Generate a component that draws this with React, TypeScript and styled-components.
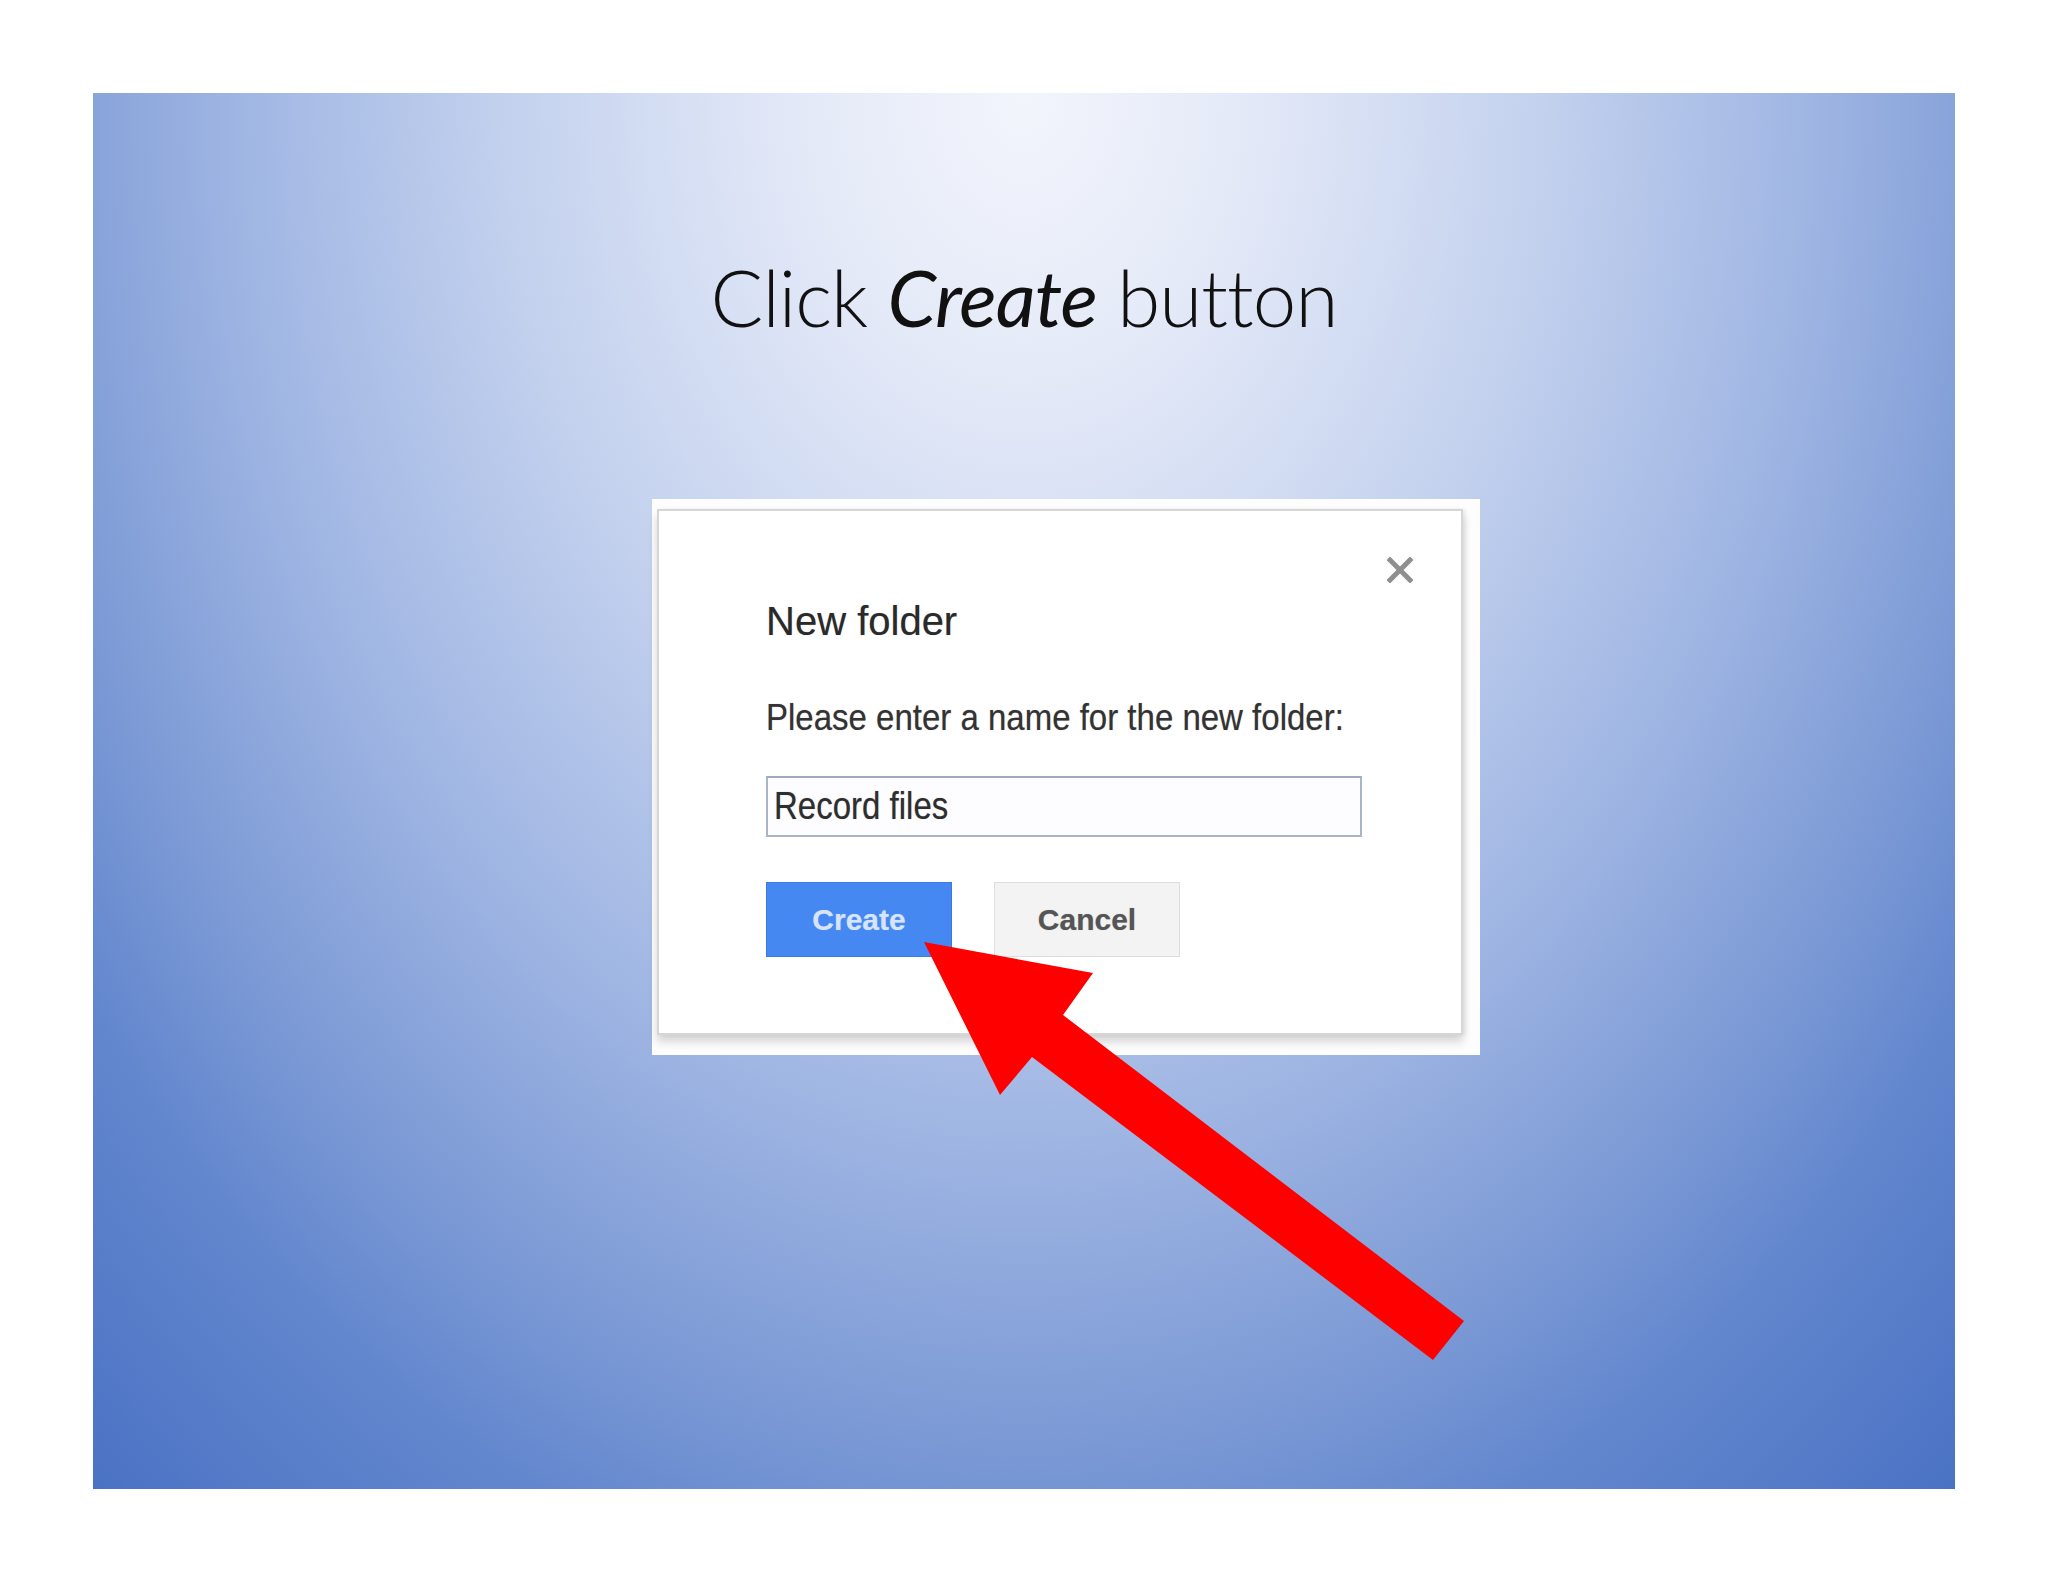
import React from 'react';
import styled, { createGlobalStyle } from 'styled-components';

const GlobalStyle = createGlobalStyle`
  html, body {
    margin: 0;
    padding: 0;
    background: #ffffff;
  }
`;

const App: React.FC = () => {
  return (
    <>
      <GlobalStyle />
      <Page>
        <Slide>
          <Title>
            <span>Click </span>
            <Em>Create</Em>
            <span> button</span>
          </Title>

          <ShotFrame>
            <Dialog>
              <CloseRow>
                <CloseIcon viewBox="0 0 26 26" aria-label="Close">
                  <line x1="3" y1="3" x2="23" y2="23" />
                  <line x1="23" y1="3" x2="3" y2="23" />
                </CloseIcon>
              </CloseRow>
              <DialogTitle>New folder</DialogTitle>
              <Prompt>
                <Stretch $y={1.1}>Please enter a name for the new folder:</Stretch>
              </Prompt>
              <NameField>
                <Stretch $y={1.18}>Record files</Stretch>
              </NameField>
              <ButtonRow>
                <DialogButton $primary>Create</DialogButton>
                <DialogButton>Cancel</DialogButton>
              </ButtonRow>
            </Dialog>
          </ShotFrame>

          <Arrow viewBox="0 0 1862 1396">
            <polygon points="831,849 1000,880 970,922 1371,1228 1340,1267 939,964 907,1002" />
          </Arrow>
        </Slide>
      </Page>
    </>
  );
};

export default App;

// Styled components
const Page = styled.div`
  width: 2048px;
  height: 1582px;
  box-sizing: border-box;
  padding: 93px 0 0 93px;
  background: #ffffff;
`;

const Slide = styled.div`
  position: relative;
  width: 1862px;
  height: 1396px;
  display: flex;
  flex-direction: column;
  align-items: center;
  overflow: hidden;
  background: radial-gradient(
    ellipse 1154px 1536px at 50% 0%,
    #f3f5fc 0%,
    #e5eaf8 18%,
    #c3d1ee 45%,
    #9cb3e2 70%,
    #7b99d5 88%,
    #6387ce 100%,
    #4a72c4 122%
  );
`;

const Title = styled.h1`
  margin: 165px 0 0 0;
  font-family: Lato, 'Open Sans', sans-serif;
  font-weight: 300;
  font-size: 78px;
  letter-spacing: -0.9px;
  line-height: 1;
  color: #111111;
  white-space: pre;
`;

const Em = styled.em`
  font-style: italic;
  font-weight: 400;
`;

const ShotFrame = styled.div`
  align-self: flex-start;
  margin: 163px 0 0 559px;
  width: 828px;
  height: 556px;
  box-sizing: border-box;
  padding: 10px 17px 20px 5px;
  background: #fdfdfd;
`;

const Dialog = styled.div`
  display: flex;
  flex-direction: column;
  align-items: flex-start;
  box-sizing: border-box;
  width: 806px;
  padding: 0 48px 76px 107px;
  border: 2px solid #d6d6d6;
  background: #ffffff;
  box-shadow: 0 7px 9px rgba(0, 0, 0, 0.16), 3px 0 4px rgba(0, 0, 0, 0.06);
  font-family: 'Liberation Sans', Arial, sans-serif;
  text-shadow: 0 0 1px rgba(0, 0, 0, 0.35);
`;

const CloseRow = styled.div`
  align-self: stretch;
  display: flex;
  justify-content: flex-end;
  margin-top: 46px;
  height: 26px;
`;

const CloseIcon = styled.svg`
  width: 26px;
  height: 26px;
  stroke: #8f8f8f;
  stroke-width: 5;
  stroke-linecap: square;
`;

const DialogTitle = styled.div`
  margin-top: 18px;
  font-size: 40px;
  line-height: 1;
  height: 40px;
  color: #2a2a2a;
`;

const Prompt = styled.div`
  margin-top: 60px;
  font-size: 33px;
  line-height: 1;
  height: 33px;
  color: #333333;
`;

const Stretch = styled.span<{ $y: number }>`
  display: inline-block;
  transform: scaleY(${p => p.$y});
  transform-origin: 50% 50%;
`;

const NameField = styled.div`
  margin-top: 42px;
  width: 596px;
  height: 61px;
  box-sizing: border-box;
  display: flex;
  align-items: center;
  padding: 0 0 2px 6px;
  border: 2px solid #aab5cc;
  border-top-color: #9eaac4;
  background: #fdfdff;
  font-size: 33px;
  color: #2e2e2e;
`;

const ButtonRow = styled.div`
  display: flex;
  gap: 42px;
  margin-top: 45px;
`;

const DialogButton = styled.div<{ $primary?: boolean }>`
  width: 186px;
  height: 75px;
  box-sizing: border-box;
  display: flex;
  align-items: center;
  justify-content: center;
  font-size: 30px;
  font-weight: 700;
  border: 1px solid ${p => (p.$primary ? '#3b7ae6' : '#dedede')};
  background: ${p => (p.$primary ? '#4688f1' : '#f3f3f3')};
  color: ${p => (p.$primary ? '#d6e4fc' : '#555555')};
  text-shadow: ${p => (p.$primary ? '0 0 1px rgba(255, 255, 255, 0.4)' : '0 0 1px rgba(0, 0, 0, 0.3)')};
`;

const Arrow = styled.svg`
  position: absolute;
  left: 0;
  top: 0;
  width: 1862px;
  height: 1396px;
  pointer-events: none;
  fill: #ff0000;
`;
